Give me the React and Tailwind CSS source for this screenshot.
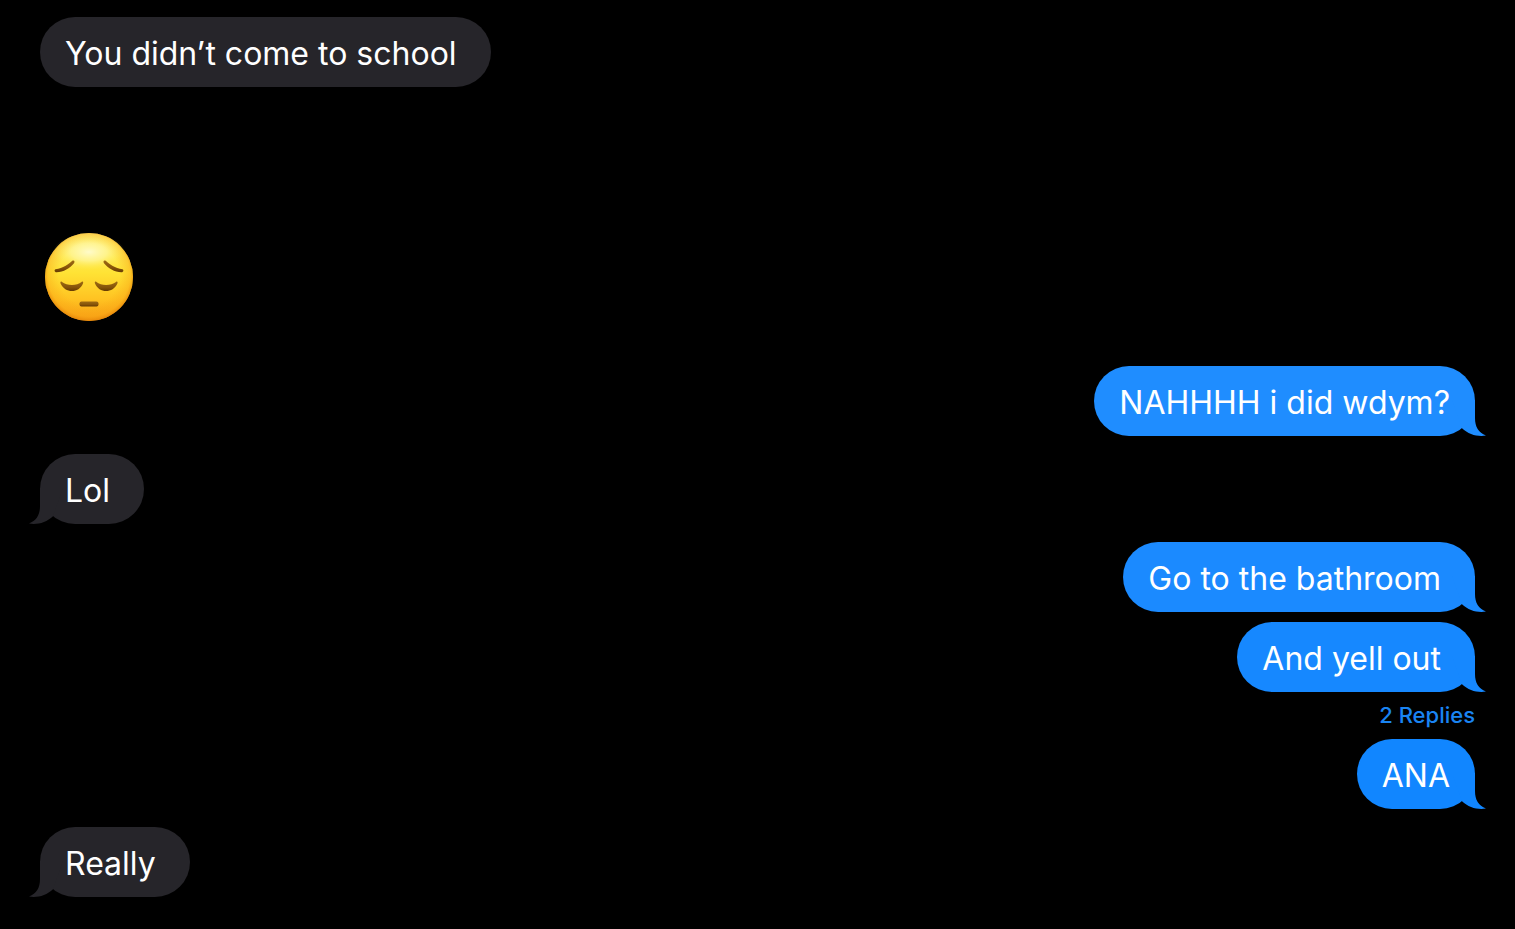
import React from "react";

function Tail({ side, color }) {
  const place = side === "right" ? "-right-[11px]" : "-left-[11px] -scale-x-100";
  return (
    <svg
      aria-hidden="true"
      viewBox="0 0 34 40"
      className={"absolute bottom-0 h-10 w-[34px] " + place}
    >
      <path
        fill={color}
        d="M0 4 H23 V22 C23 31 26.5 36.5 34 39.5 C26 41 16.500 38.500 10 32.200 Z"
      />
    </svg>
  );
}

function Bubble({ side = "left", color = "#26252a", wide = true, tail = true, children }) {
  return (
    <div
      className={
        "relative rounded-[35px] pt-[17px] pb-[13px] pl-[25px] text-[32px] leading-[40px] text-white " +
        (wide ? "pr-[34px] " : "pr-[25px] ") +
        (side === "right" ? "self-end" : "self-start")
      }
      style={{ backgroundColor: color }}
    >
      {tail && <Tail side={side} color={color} />}
      <p className="relative whitespace-nowrap">{children}</p>
    </div>
  );
}

function PensiveFace() {
  return (
    <svg
      role="img"
      aria-label="Pensive face"
      viewBox="0 0 88 88"
      className="ml-[5px] h-[88px] w-[88px] self-start"
    >
      <defs>
        <linearGradient id="face" x1="0" y1="0" x2="0" y2="1">
          <stop offset="0" stopColor="#fff07a" />
          <stop offset="0.45" stopColor="#ffe335" />
          <stop offset="0.75" stopColor="#ffc322" />
          <stop offset="1" stopColor="#f79c14" />
        </linearGradient>
        <radialGradient id="rim" cx="0.5" cy="0.48" r="0.53">
          <stop offset="0.65" stopColor="#f9a414" stopOpacity="0" />
          <stop offset="0.88" stopColor="#f9a414" stopOpacity="0.4" />
          <stop offset="1" stopColor="#e07c06" stopOpacity="0.95" />
        </radialGradient>
        <radialGradient id="shine" cx="0.5" cy="0.5" r="0.5">
          <stop offset="0" stopColor="#fffcd0" stopOpacity="0.95" />
          <stop offset="0.5" stopColor="#fff9a8" stopOpacity="0.65" />
          <stop offset="1" stopColor="#ffee50" stopOpacity="0" />
        </radialGradient>
        <linearGradient id="feature" x1="0" y1="0" x2="0" y2="1">
          <stop offset="0" stopColor="#9c6a14" />
          <stop offset="0.6" stopColor="#875409" />
          <stop offset="1" stopColor="#653a03" />
        </linearGradient>
      </defs>
      <circle cx="44" cy="44" r="44" fill="url(#face)" />
      <circle cx="44" cy="44" r="44" fill="url(#rim)" />
      <ellipse cx="44" cy="19" rx="36" ry="18" fill="url(#shine)" />
      <g id="left-features" fill="url(#feature)">
        <path d="M10.500 36.300 C18 35 23.500 31.500 27 28 C29 26.600 30.200 28.400 29 30.300 C25 35.500 18.500 39 11.500 39.300 C9.500 39.300 9 36.800 10.500 36.300 Z" />
        <path d="M17 49 C22 53 32 53 36.500 49 C37.800 48 38.600 49 38 50.500 C34 60.500 20 60.500 15.600 50.500 C15 49 15.800 48 17 49 Z" />
      </g>
      <use href="#left-features" transform="matrix(-1 0 0 1 88 0)" />
      <rect x="34.500" y="68.500" width="19" height="5" rx="2" fill="url(#feature)" />
    </svg>
  );
}

export default function App() {
  return (
    <main className="flex min-h-screen flex-col bg-black px-10 pt-[17px] pb-8 font-['Inter',sans-serif]">
      <Bubble tail={false}>You didn’t come to school</Bubble>
      <div className="mt-[146px] flex flex-col gap-[45px]">
        <PensiveFace />
        <div className="flex flex-col gap-[18px]">
          <Bubble side="right" color="#1f8dff" wide={false}>NAHHHH i did wdym?</Bubble>
          <Bubble>Lol</Bubble>
          <div className="flex flex-col">
            <Bubble side="right" color="#1b8aff">Go to the bathroom</Bubble>
            <div className="mt-[10px] flex flex-col">
              <Bubble side="right" color="#1688ff">And yell out</Bubble>
            </div>
            <button type="button" className="my-[11px] self-end text-[22px] leading-[25px] font-medium text-[#1a84f2]">
              2 Replies
            </button>
            <Bubble side="right" color="#1186ff" wide={false}>ANA</Bubble>
          </div>
          <Bubble>Really</Bubble>
        </div>
      </div>
    </main>
  );
}
